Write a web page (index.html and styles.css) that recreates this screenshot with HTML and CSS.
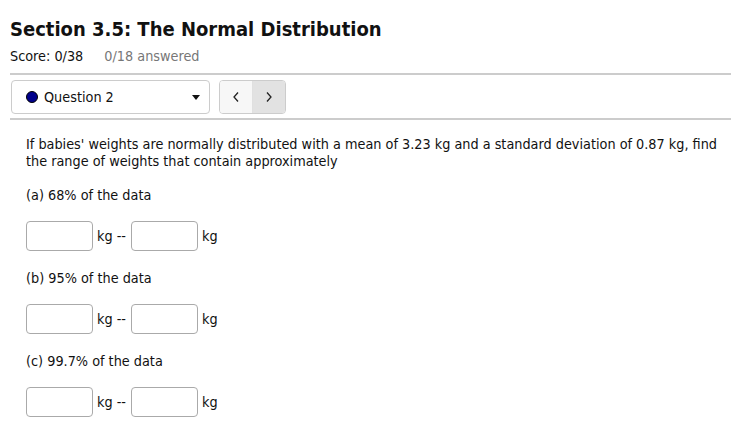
FILE: index.html
```html
<!DOCTYPE html>
<html>
<head>
<meta charset="utf-8">
<link rel="stylesheet" href="styles.css">
</head>
<body>
<div class="page">
  <h1 class="title">Section 3.5: The Normal Distribution</h1>
  <div class="score"><span>Score: 0/38</span><span class="answered">0/18 answered</span></div>
  <div class="toolbar">
    <div class="select">
      <span class="dot"></span>
      <span class="qname">Question 2</span>
      <span class="caret"></span>
    </div>
    <div class="nav">
      <div class="navbtn prev"><svg width="8" height="12" viewBox="0 0 8 12"><path d="M6 1.5 L2 6 L6 10.5" fill="none" stroke="#222" stroke-width="1.3"/></svg></div>
      <div class="navbtn next"><svg width="8" height="12" viewBox="0 0 8 12"><path d="M2 1.5 L6 6 L2 10.5" fill="none" stroke="#222" stroke-width="1.3"/></svg></div>
    </div>
  </div>
  <div class="question">
    <p class="intro">If babies' weights are normally distributed with a mean of 3.23 kg and a standard deviation of 0.87 kg, find the range of weights that contain approximately</p>
    <p class="part">(a) 68% of the data</p>
    <div class="answer"><span class="box"></span><span class="unit">kg --</span><span class="box"></span><span class="unit">kg</span></div>
    <p class="part">(b) 95% of the data</p>
    <div class="answer"><span class="box"></span><span class="unit">kg --</span><span class="box"></span><span class="unit">kg</span></div>
    <p class="part">(c) 99.7% of the data</p>
    <div class="answer"><span class="box"></span><span class="unit">kg --</span><span class="box"></span><span class="unit">kg</span></div>
  </div>
</div>
</body>
</html>
```
FILE: styles.css
```css
html, body { margin: 0; padding: 0; background: #fff; }
body {
  font-family: "DejaVu Sans Condensed", "DejaVu Sans", sans-serif;
  color: #111;
  font-size: 14.3px;
}
.page { padding: 15px 0 0 10px; }
.title {
  margin: 0;
  font-size: 20px;
  font-weight: bold;
  line-height: 28px;
  color: #111;
}
.score {
  margin-top: 3px;
  line-height: 20px;
  padding-bottom: 7px;
  border-bottom: 2px solid #ccc;
  display: flex;
  gap: 21px;
}
.answered { color: #777; }
.toolbar {
  display: flex;
  gap: 9px;
  padding: 5px 0 4px 1px;
  border-bottom: 2px solid #ccc;
}
.select {
  box-sizing: border-box;
  width: 199px;
  height: 34px;
  border: 1px solid #ccc;
  border-radius: 4px;
  display: flex;
  align-items: center;
  padding: 0 8px 0 14px;
}
.dot {
  width: 12px; height: 12px; border-radius: 50%;
  background: #00008b;
  border: 1px solid #000;
  box-sizing: border-box;
  margin-right: 6px;
}
.qname { flex: 1; }
.caret {
  width: 0; height: 0;
  border-left: 4px solid transparent;
  border-right: 4px solid transparent;
  border-top: 5px solid #111;
  margin-right: 1px;
}
.nav {
  display: flex;
  border: 1px solid #ccc;
  border-radius: 4px;
  overflow: hidden;
  height: 34px;
  box-sizing: border-box;
}
.navbtn {
  width: 32px;
  display: flex; align-items: center; justify-content: center;
}
.prev { background: #f7f7f7; border-right: 1px solid #e0e0e0; }
.next { background: #e2e2e2; }
.question { padding: 16px 0 0 16px; }
.question p { margin: 0; line-height: 17px; }
.intro { padding-right: 8px; }
.part { margin-top: 17px !important; }
.answer {
  display: flex;
  align-items: center;
  margin-top: 17px;
  gap: 4px;
}
.box {
  width: 67px; height: 30px;
  box-sizing: border-box;
  border: 1px solid #aaa;
  border-radius: 4px;
  background: #fff;
}
.unit { margin-right: 1px; }
.answer + .part { margin-top: 19px !important; }
```
